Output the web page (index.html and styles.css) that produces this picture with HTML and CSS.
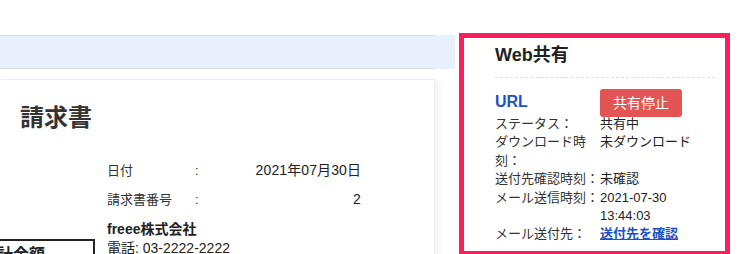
FILE: index.html
```html
<!DOCTYPE html>
<html lang="ja">
<head>
<meta charset="utf-8">
<title>請求書 - Web共有</title>
<link rel="stylesheet" href="styles.css">
</head>
<body>
<div class="page">
  <div class="main">
    <div class="toolbar"><div class="toolbar-inner"></div></div>
    <div class="card">
      <h1 class="title">請求書</h1>
      <div class="card-body">
        <div class="left-col">
          <div class="total-box">合計金額</div>
        </div>
        <div class="info">
          <div class="info-grid">
            <span class="k">日付</span><span class="c">:</span><span class="v">2021年07月30日</span>
            <span class="k">請求書番号</span><span class="c">:</span><span class="v">2</span>
          </div>
          <div class="company">freee株式会社</div>
          <div class="tel">電話: 03-2222-2222</div>
        </div>
      </div>
    </div>
  </div>
  <aside class="share">
    <h2 class="share-title">Web共有</h2>
    <div class="url-row">
      <span class="url">URL</span>
      <button class="stop-btn" type="button">共有停止</button>
    </div>
    <div class="meta">
      <span class="mk">ステータス：</span><span class="mv">共有中</span>
      <span class="mk">ダウンロード時刻：</span><span class="mv">未ダウンロード</span>
      <span class="mk">送付先確認時刻：</span><span class="mv">未確認</span>
      <span class="mk">メール送信時刻：</span><span class="mv">2021-07-30 13:44:03</span>
      <span class="mk">メール送付先：</span><span class="mv"><a class="link" href="#">送付先を確認</a></span>
    </div>
  </aside>
</div>
</body>
</html>
```

FILE: styles.css
```css
html, body {
  margin: 0;
  padding: 0;
  background: #ffffff;
}

body {
  width: 749px;
  height: 254px;
  overflow: hidden;
  font-family: "Liberation Sans", "Noto Sans CJK JP", sans-serif;
  color: #333333;
}

.page {
  display: flex;
  align-items: flex-start;
}

.main {
  flex: none;
  width: 455px;
  padding-top: 35px;
}

.toolbar {
  background: #e9f0fd;
  height: 34px;
}

.toolbar-inner {
  width: 435px;
  height: 32px;
  border-top: 1px solid #dadde3;
  border-bottom: 1px solid #dadde3;
}

.card {
  box-sizing: border-box;
  width: 436px;
  height: 420px;
  margin-top: 10px;
  margin-left: -1px;
  border: 1px solid #ededed;
  box-shadow: 3px 2px 8px rgba(0, 0, 0, 0.06);
  padding: 22px 0 0 20px;
  background: #ffffff;
}

.title {
  margin: 0;
  font-size: 24px;
  line-height: 32px;
  font-weight: bold;
  color: #333333;
}

.card-body {
  display: flex;
  gap: 13px;
  margin-top: 22px;
}

.left-col {
  flex: none;
  width: 74px;
}

.total-box {
  box-sizing: border-box;
  width: 134px;
  height: 60px;
  margin-left: -59px;
  margin-top: 83px;
  border: 2px solid #222222;
  padding: 4px 0 0 18px;
  font-size: 16px;
  line-height: 20px;
  font-weight: bold;
  color: #222222;
  white-space: nowrap;
}

.info {
  width: 254px;
}

.info-grid {
  display: grid;
  grid-template-columns: 88px 10px 1fr;
  line-height: 29px;
  font-size: 13px;
}

.info-grid .v {
  text-align: right;
  font-size: 14px;
  letter-spacing: 0.1px;
  color: #222222;
}

.company {
  margin-top: 5px;
  font-size: 14px;
  line-height: 20px;
  font-weight: bold;
  color: #222222;
}

.tel {
  font-size: 14px;
  line-height: 18px;
  color: #222222;
}

.share {
  flex: none;
  box-sizing: border-box;
  width: 271px;
  height: 223px;
  margin-left: 4px;
  margin-top: 33px;
  border: 5px solid #fc1f5b;
  padding: 5px 10px 0 31px;
  background: #ffffff;
  overflow: hidden;
}

.share-title {
  margin: 0;
  font-size: 18px;
  line-height: 24px;
  font-weight: bold;
  color: #222222;
  padding-bottom: 10px;
  border-bottom: 1px dashed #dddddd;
}

.url-row {
  display: flex;
  align-items: flex-start;
  height: 26px;
  margin-top: 11px;
}

.url {
  flex: none;
  width: 105px;
  padding-top: 2px;
  font-size: 16px;
  line-height: 22px;
  font-weight: bold;
  color: #1b51c4;
}

.stop-btn {
  flex: none;
  width: 82px;
  height: 28px;
  padding: 0;
  border: none;
  border-radius: 3px;
  background: #e35555;
  color: #ffffff;
  font-family: "Liberation Sans", "Noto Sans CJK JP", sans-serif;
  font-size: 14px;
  line-height: 28px;
}

.meta {
  display: grid;
  grid-template-columns: 105px 1fr;
  font-size: 13px;
  line-height: 18.4px;
}

.mk {
  color: #333333;
}

.mv {
  color: #222222;
}

.link {
  color: #1b51c4;
  font-weight: bold;
  text-decoration: underline;
}
```
